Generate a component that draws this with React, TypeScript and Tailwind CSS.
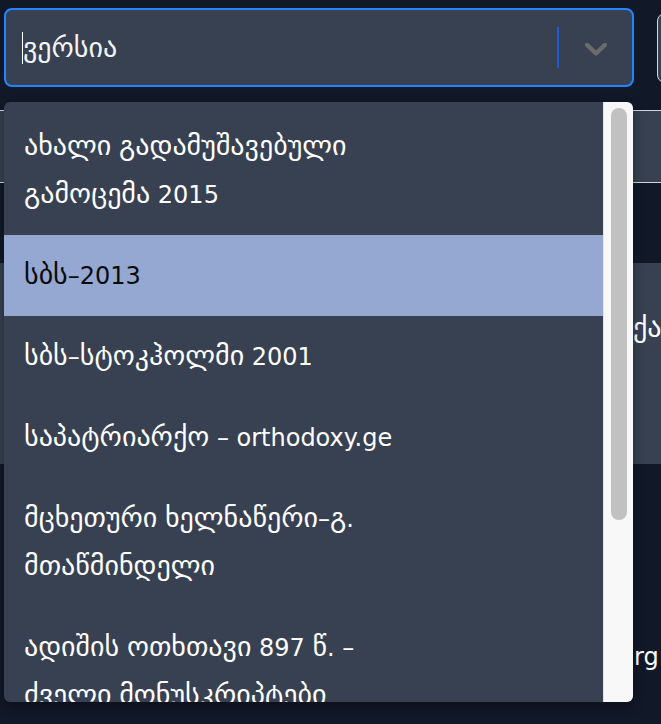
import React from 'react';

interface VersionOption {
  id: number;
  lines: string[];
}

const OPTIONS: VersionOption[] = [
  { id: 1, lines: ['ახალი გადამუშავებული', 'გამოცემა 2015'] },
  { id: 2, lines: ['სბს–2013'] },
  { id: 3, lines: ['სბს–სტოკჰოლმი 2001'] },
  { id: 4, lines: ['საპატრიარქო – orthodoxy.ge'] },
  { id: 5, lines: ['მცხეთური ხელნაწერი–გ.', 'მთაწმინდელი'] },
  { id: 6, lines: ['ადიშის ოთხთავი 897 წ. –', 'ძველი მონუსკრიპტები'] },
];

const FOCUSED_ID = 2;

// Georgian letters render a bit larger than latin/digits in the original font
function MixedText({ text }: { text: string }) {
  const parts = text.split(/([\u10A0-\u10FF]+)/).filter(Boolean);
  return (
    <>
      {parts.map((part, i) =>
        /[\u10A0-\u10FF]/.test(part) ? (
          <span key={i} className="text-[28px] leading-none">
            {part}
          </span>
        ) : (
          <span key={i} className="leading-none">
            {part}
          </span>
        )
      )}
    </>
  );
}

function Chevron() {
  return (
    <svg className="w-[38px] h-[38px] text-[#6b6b6b]" viewBox="0 0 20 20" fill="currentColor">
      <path d="M4.516 7.548c0.436-0.446 1.043-0.481 1.576 0l3.908 3.747 3.908-3.747c0.533-0.481 1.141-0.446 1.574 0 0.436 0.445 0.408 1.197 0 1.615-0.406 0.418-4.695 4.502-4.695 4.502-0.217 0.223-0.502 0.335-0.787 0.335s-0.57-0.112-0.789-0.335c0 0-4.287-4.084-4.695-4.502s-0.436-1.17 0-1.615z" />
    </svg>
  );
}

export default function App() {
  return (
    <div
      className="relative w-[661px] h-[724px] overflow-hidden bg-[#111827] text-white"
      style={{ fontFamily: '"DejaVu Sans", "Noto Sans", sans-serif' }}
    >
      {/* Top controls */}
      <div className="flex items-start pt-2 pl-1">
        <div className="flex-shrink-0 flex items-center w-[630px] h-[79px] bg-[#374151] border-2 border-[#2684ff] rounded-lg">
          <div className="flex-1 flex items-center pl-4 text-[28px] leading-none text-[#f3f4f6]">
            <span className="w-px h-8 bg-white"></span>
            <span>ვერსია</span>
          </div>
          <span className="w-[2px] h-[41px] bg-[#1f5ad8]"></span>
          <div className="w-[73px] flex items-center justify-center">
            <Chevron />
          </div>
        </div>
        <div className="flex-shrink-0 ml-[23px] mt-[5px] w-[200px] h-[70px] bg-[#374151] border border-gray-300 rounded-lg"></div>
      </div>

      {/* Content behind the menu */}
      <div className="mt-[23px] h-[73px] bg-[#374151] border-y border-gray-300"></div>
      <div className="mt-[80px] h-[201px] bg-[#374151] pt-11 pl-[633px] text-[28px] whitespace-nowrap">
        ქართული
      </div>
      <div className="mt-[175px] pl-[634px] text-[24px] whitespace-nowrap">rg</div>

      {/* Dropdown menu */}
      <div className="absolute left-1 top-[102px] w-[629px] h-[600px] flex rounded-md overflow-hidden shadow-[0_4px_11px_rgba(0,0,0,0.35)]">
        <div className="flex-1 bg-[#374151] pt-1 overflow-hidden text-[24px]">
          {OPTIONS.map(option => {
            const isFocused = option.id === FOCUSED_ID;
            return (
              <div
                key={option.id}
                className={`pl-5 pr-5 pt-[17px] pb-[16px] whitespace-nowrap ${
                  isFocused ? 'bg-[#95a8d1] text-[#0b0b0b]' : 'text-white'
                }`}
              >
                {option.lines.map(line => (
                  <div key={line} className="h-[48px] flex items-center">
                    <div>
                      <MixedText text={line} />
                    </div>
                  </div>
                ))}
              </div>
            );
          })}
        </div>
        {/* Scrollbar */}
        <div className="w-[30px] bg-[#f8f8f8] border-l border-[#e4e4e4] pt-[6px] pl-[7px]">
          <div className="w-[16px] h-[412px] rounded-full bg-[#c1c1c1]"></div>
        </div>
      </div>
    </div>
  );
}
